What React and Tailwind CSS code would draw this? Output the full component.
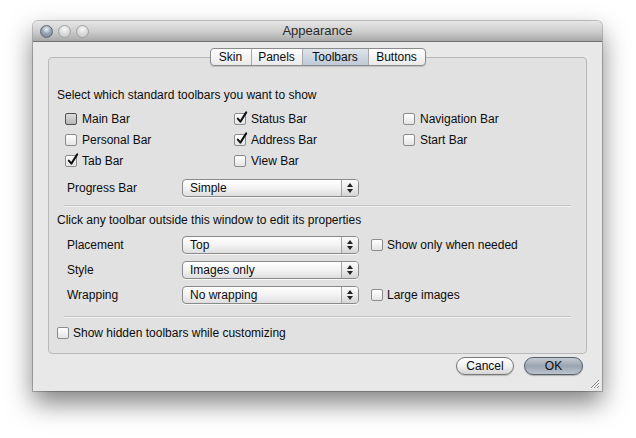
import React from 'react';

const font = { fontFamily: '"Liberation Sans", Arial, sans-serif' };

const Checkbox = ({ checked, focus }) => (
  <span
    className={`relative inline-block h-[12px] w-[12px] shrink-0 rounded-[2px] border ${
      focus ? 'border-[#4f4f4f] bg-gradient-to-b from-[#dcdcdc] to-[#b8b8b8]' : 'border-[#8c8c8c] bg-gradient-to-b from-white to-[#e4e4e4]'
    }`}
  >
    {checked && (
      <svg className="absolute left-[1px] top-[-3px]" width="12" height="13" viewBox="0 0 12 13">
        <path d="M1.8 7.6 L4.4 10.6 L10.2 1.4" fill="none" stroke="#111" strokeWidth="2" strokeLinecap="round" strokeLinejoin="round" />
      </svg>
    )}
  </span>
);

const Check = ({ label, checked, focus }) => (
  <div className="flex h-[21px] items-center gap-[5px]">
    <Checkbox checked={checked} focus={focus} />
    <span>{label}</span>
  </div>
);

const Select = ({ value }) => (
  <div className="flex h-[18px] w-[177px] overflow-hidden rounded-[4px] border border-[#8a8a8a] bg-gradient-to-b from-white via-[#f3f3f3] to-[#dedede] shadow-[0_1px_0_rgba(255,255,255,0.7)]">
    <div className="flex flex-1 items-center pl-[7px] leading-none">{value}</div>
    <div className="flex w-[17px] flex-col items-center justify-center gap-[2px] border-l border-[#a4a4a4] bg-gradient-to-b from-[#fafafa] via-[#ececec] to-[#d4d4d4]">
      <svg width="6" height="4" viewBox="0 0 6 4"><path d="M3 0 L6 4 L0 4 Z" fill="#222" /></svg>
      <svg width="6" height="4" viewBox="0 0 6 4"><path d="M0 0 L6 0 L3 4 Z" fill="#222" /></svg>
    </div>
  </div>
);

const Separator = ({ className }) => (
  <div className={`mx-[7px] ${className}`}>
    <div className="h-px bg-[#c4c4c4]" />
    <div className="h-px bg-[#f2f2f2]" />
  </div>
);

const tabs = [
  { label: 'Skin', w: 'w-[40px]' },
  { label: 'Panels', w: 'w-[51px]' },
  { label: 'Toolbars', w: 'w-[66px]', active: true },
  { label: 'Buttons', w: 'w-[57px]' },
];

export default function App() {
  return (
    <div className="h-[438px] w-[636px] overflow-hidden bg-white pl-[33px] pt-[21px] text-[12px] text-[#0c0c0c]" style={font}>
      <div className="relative flex h-[370px] w-[569px] flex-col rounded-t-[5px] bg-[#e8e8e8] shadow-[0_0_0_1px_rgba(0,0,0,0.22),0_12px_26px_rgba(0,0,0,0.5)]">
        {/* title bar */}
        <div className="relative flex h-[21px] items-center rounded-t-[5px] border-b border-[#727272] bg-gradient-to-b from-[#e6e6e6] via-[#cfcfcf] to-[#a9a9a9] pl-[7px]">
          <div className="flex gap-[5px]">
            <span className="h-[13px] w-[13px] rounded-full border border-[#5f6b78] bg-[radial-gradient(circle_at_50%_30%,#eef2f6_0%,#9aa6b4_45%,#6e7c8c_100%)]" />
            <span className="h-[13px] w-[13px] rounded-full border border-[#a2a2a2] bg-[radial-gradient(circle_at_50%_30%,#fafafa_0%,#dadada_50%,#c4c4c4_100%)]" />
            <span className="h-[13px] w-[13px] rounded-full border border-[#a2a2a2] bg-[radial-gradient(circle_at_50%_30%,#fafafa_0%,#dadada_50%,#c4c4c4_100%)]" />
          </div>
          <div className="absolute inset-0 flex items-center justify-center text-[13px] text-[#2a2a2a]">Appearance</div>
        </div>

        {/* body */}
        <div className="flex flex-col px-[15px] pt-[15px]">
          <div className="relative flex h-[297px] flex-col rounded-[4px] border border-[#b9b9b9] bg-[#e1e1e1] px-[8px]">
            {/* tabs */}
            <div className="absolute left-0 right-0 top-[-10px] flex justify-center">
              <div className="flex h-[18px] overflow-hidden rounded-[4px] border border-[#8a8a8a] bg-gradient-to-b from-white to-[#e9e9e9] shadow-[0_1px_1px_rgba(0,0,0,0.15)]">
                {tabs.map((t, i) => (
                  <div
                    key={t.label}
                    className={`flex items-center justify-center ${t.w} ${i > 0 ? 'border-l border-[#a8a8a8]' : ''} ${t.active ? 'bg-gradient-to-b from-[#dfe6ee] via-[#cdd7e2] to-[#bfcad7]' : ''}`}
                  >
                    {t.label}
                  </div>
                ))}
              </div>
            </div>

            <div className="mt-[28px] flex h-[18px] items-center">Select which standard toolbars you want to show</div>

            <div className="mt-[4px] grid grid-cols-[169px_169px_169px] pl-[8px]">
              <Check label="Main Bar" focus />
              <Check label="Status Bar" checked />
              <Check label="Navigation Bar" />
              <Check label="Personal Bar" />
              <Check label="Address Bar" checked />
              <Check label="Start Bar" />
              <Check label="Tab Bar" checked />
              <Check label="View Bar" />
              <div />
            </div>

            <div className="mt-[7px] flex h-[19px] items-center pl-[10px]">
              <span className="w-[115px]">Progress Bar</span>
              <Select value="Simple" />
            </div>

            <Separator className="mt-[8px]" />

            <div className="mt-[4px] flex h-[18px] items-center">Click any toolbar outside this window to edit its properties</div>

            <div className="mt-[7px] flex flex-col gap-[7px] pl-[10px]">
              <div className="flex h-[18px] items-center">
                <span className="w-[115px]">Placement</span>
                <Select value="Top" />
                <div className="ml-[12px] flex items-center gap-[4px]">
                  <Checkbox />
                  <span>Show only when needed</span>
                </div>
              </div>
              <div className="flex h-[18px] items-center">
                <span className="w-[115px]">Style</span>
                <Select value="Images only" />
              </div>
              <div className="flex h-[18px] items-center">
                <span className="w-[115px]">Wrapping</span>
                <Select value="No wrapping" />
                <div className="ml-[12px] flex items-center gap-[4px]">
                  <Checkbox />
                  <span>Large images</span>
                </div>
              </div>
            </div>

            <Separator className="mt-[12px]" />

            <div className="mt-[6px] flex h-[18px] items-center gap-[4px]">
              <Checkbox />
              <span>Show hidden toolbars while customizing</span>
            </div>
          </div>

          {/* buttons */}
          <div className="mt-[3px] flex justify-end gap-[10px] pr-[4px]">
            <button className="flex h-[18px] w-[58px] items-center justify-center rounded-full border border-[#777] bg-gradient-to-b from-white via-[#f1f1f1] to-[#d6d6d6] text-[12px] shadow-[0_1px_1px_rgba(0,0,0,0.2)]">Cancel</button>
            <button className="flex h-[18px] w-[59px] items-center justify-center rounded-full border border-[#56606c] bg-gradient-to-b from-[#c4cad2] via-[#9aa4b0] to-[#bcc4cd] text-[12px] shadow-[0_1px_1px_rgba(0,0,0,0.25)]">OK</button>
          </div>
        </div>

        {/* resize grip */}
        <svg className="absolute bottom-[2px] right-[2px]" width="11" height="11" viewBox="0 0 11 11">
          <path d="M10 2 L2 10 M10 5 L5 10 M10 8 L8 10" stroke="#8a8a8a" strokeWidth="1" />
          <path d="M10.5 3 L3 10.5 M10.5 6 L6 10.5" stroke="#fff" strokeWidth="0.8" />
        </svg>
      </div>
    </div>
  );
}
